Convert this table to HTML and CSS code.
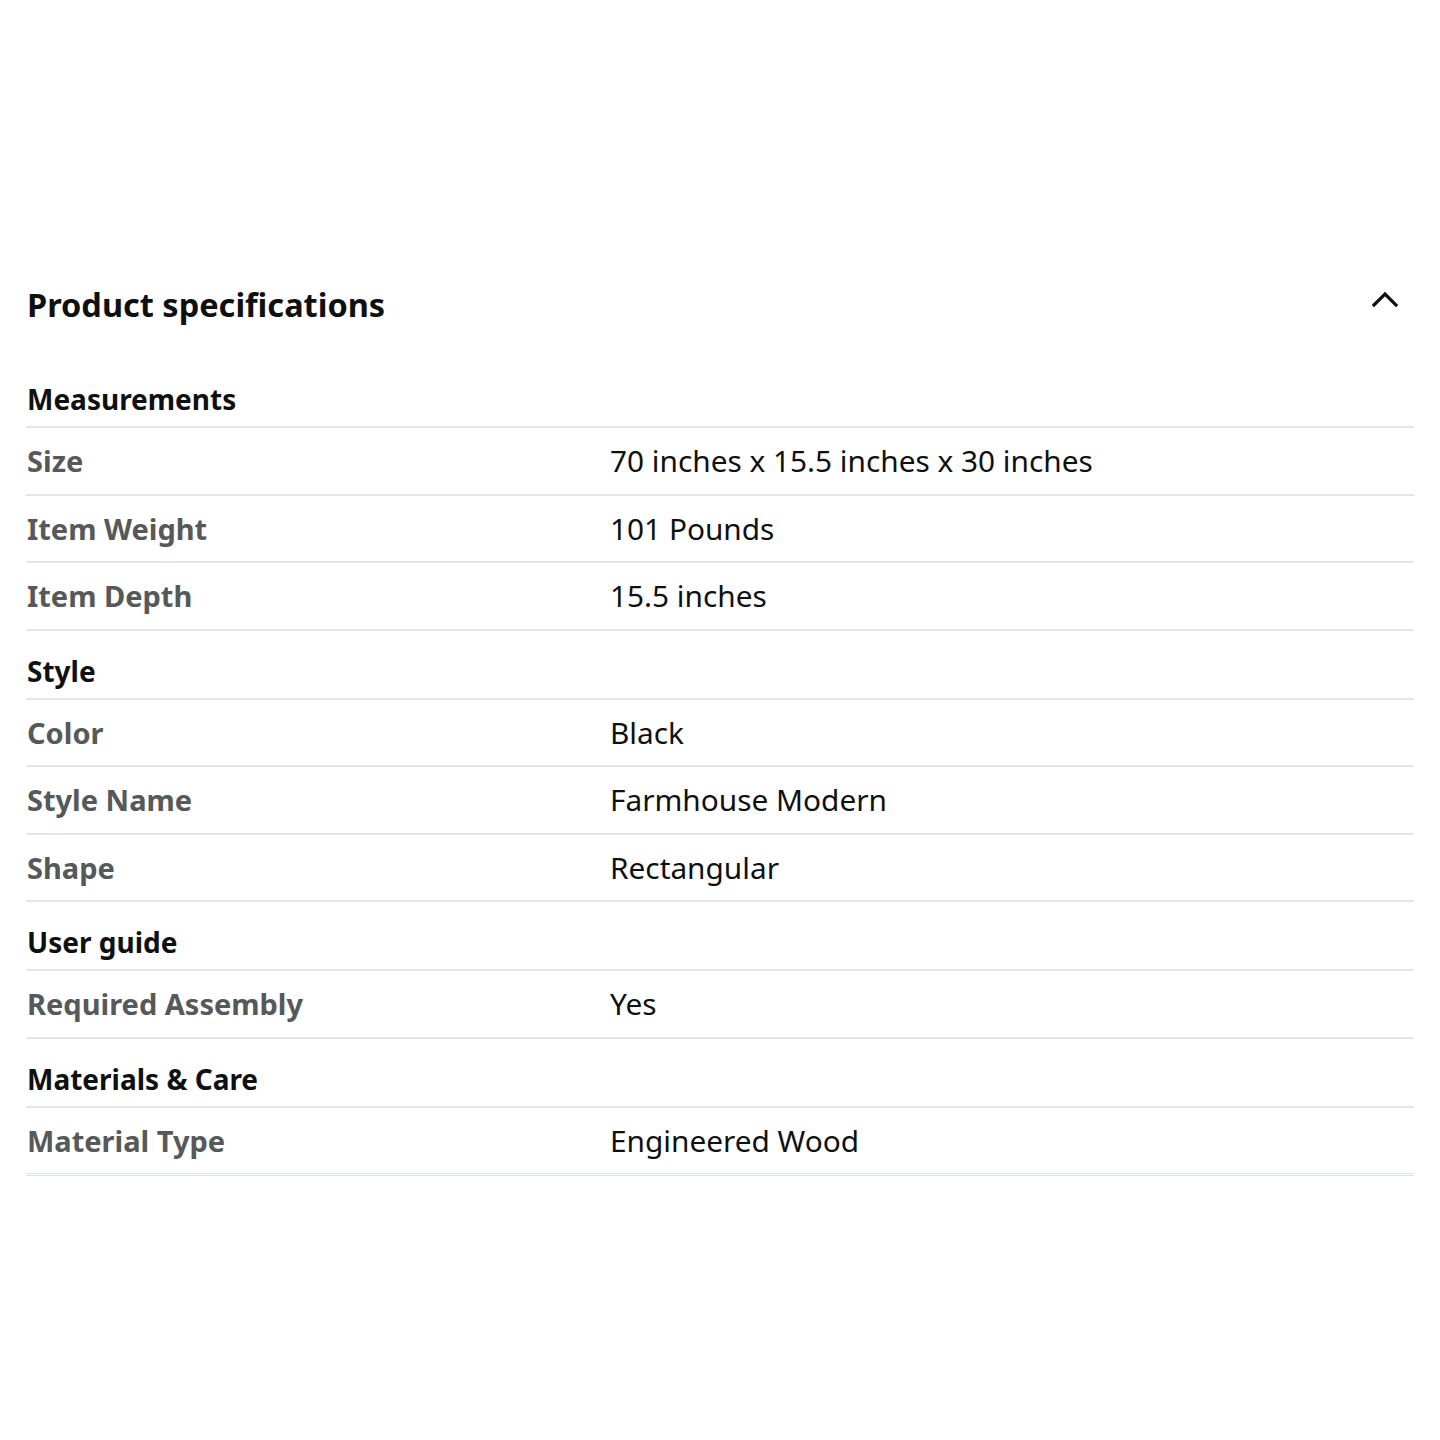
FILE: index.html
```html
<!DOCTYPE html>
<html>
<head>
<meta charset="utf-8">
<link rel="stylesheet" href="styles.css">
</head>
<body>
<div class="page">
  <div class="header">
    <h2 class="title">Product specifications</h2>
    <svg class="chevron" width="28" height="18" viewBox="0 0 28 18"><path d="M3 15 L14 4 L25 15" fill="none" stroke="#0f1111" stroke-width="3.2" stroke-linecap="square"/></svg>
  </div>
  <div class="table">
    <div class="section">Measurements</div>
    <div class="row"><div class="label">Size</div><div class="value">70 inches x 15.5 inches x 30 inches</div></div>
    <div class="row"><div class="label">Item Weight</div><div class="value">101 Pounds</div></div>
    <div class="row"><div class="label">Item Depth</div><div class="value">15.5 inches</div></div>
    <div class="section">Style</div>
    <div class="row"><div class="label">Color</div><div class="value">Black</div></div>
    <div class="row"><div class="label">Style Name</div><div class="value">Farmhouse Modern</div></div>
    <div class="row"><div class="label">Shape</div><div class="value">Rectangular</div></div>
    <div class="section">User guide</div>
    <div class="row"><div class="label">Required Assembly</div><div class="value">Yes</div></div>
    <div class="section">Materials &amp; Care</div>
    <div class="row last"><div class="label">Material Type</div><div class="value">Engineered Wood</div></div>
  </div>
</div>
</body>
</html>
```
FILE: styles.css
```css
html, body { margin: 0; padding: 0; background: #fff; }
body { font-family: "Noto Sans", "Open Sans", sans-serif; color: #0f1111; }
.page { padding: 270px 26px 0 26px; }
.header { display: flex; justify-content: space-between; align-items: flex-start; height: 89px; }
.title { margin: 0; padding: 13px 0 0 1px; font-size: 32.5px; font-weight: 700; line-height: 44px; }
.chevron { margin: 20px 15px 0 0; }
.table { display: flex; flex-direction: column; }
.section { font-size: 28px; font-weight: 700; line-height: 40px; padding: 20px 0 7px 1px; border-bottom: 2px solid #e3e6e6; height: 40px; }
.row { display: grid; grid-template-columns: 584px 1fr; align-items: center; height: 65.5px; border-bottom: 2px solid #e3e6e6; }
.row.last { border-bottom: 3px double #dfe2e2; height: 65px; }
.label { font-size: 29px; font-weight: 700; color: #565959; padding-left: 1px; }
.value { font-size: 29.8px; color: #0f1111; }
```
